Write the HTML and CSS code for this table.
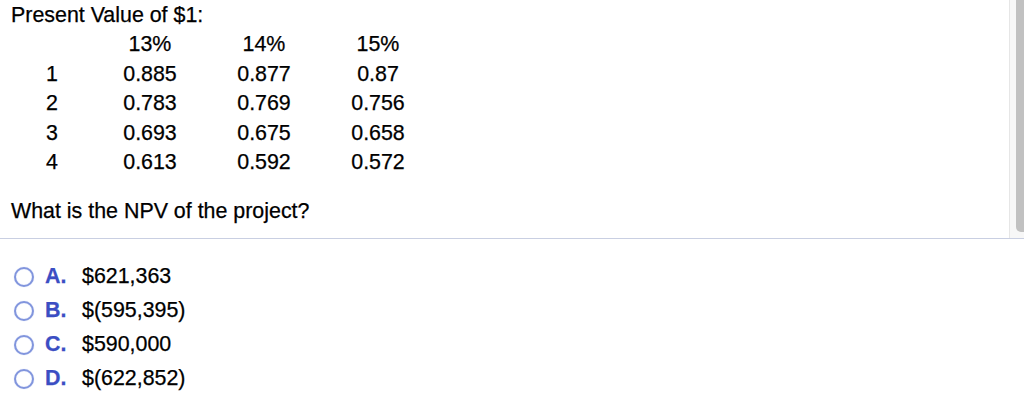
FILE: index.html
```html
<!DOCTYPE html>
<html>
<head>
<meta charset="utf-8">
<link rel="stylesheet" href="styles.css">
</head>
<body>
<div class="pane">
  <div class="content">
    <div class="title">Present Value of $1:</div>
    <div class="pv-table">
      <div></div><div>13%</div><div>14%</div><div>15%</div>
      <div>1</div><div>0.885</div><div>0.877</div><div>0.87</div>
      <div>2</div><div>0.783</div><div>0.769</div><div>0.756</div>
      <div>3</div><div>0.693</div><div>0.675</div><div>0.658</div>
      <div>4</div><div>0.613</div><div>0.592</div><div>0.572</div>
    </div>
    <div class="question">What is the NPV of the project?</div>
  </div>
  <div class="scrollbar"><div class="thumb"></div></div>
</div>
<div class="options">
  <div class="option"><span class="radio"></span><span class="letter">A.</span><span class="answer">$621,363</span></div>
  <div class="option"><span class="radio"></span><span class="letter">B.</span><span class="answer">$(595,395)</span></div>
  <div class="option"><span class="radio"></span><span class="letter">C.</span><span class="answer">$590,000</span></div>
  <div class="option"><span class="radio"></span><span class="letter">D.</span><span class="answer">$(622,852)</span></div>
</div>
</body>
</html>
```
FILE: styles.css
```css
html, body {
  margin: 0;
  padding: 0;
  background: #ffffff;
}
body {
  font-family: "Liberation Sans", Arial, sans-serif;
  font-size: 21.4px;
  color: #000000;
  -webkit-text-stroke: 0.25px #000000;
  width: 1024px;
  height: 419px;
  overflow: hidden;
}
.pane {
  display: flex;
  height: 238px;
  border-bottom: 1px solid #c9cfe2;
}
.content {
  flex: 1;
  padding-left: 11px;
}
.title {
  line-height: 30px;
}
.pv-table {
  display: grid;
  grid-template-columns: 82px 114px 114px 114px;
  grid-auto-rows: 29.5px;
  line-height: 29.5px;
  text-align: center;
}
.question {
  margin-top: 19.5px;
  line-height: 29.5px;
}
.scrollbar {
  width: 14px;
  border-left: 1px solid #e6e6e6;
  background: #f7f7f7;
  display: flex;
  justify-content: flex-end;
}
.thumb {
  width: 8px;
  height: 232px;
  background: #c1c1c1;
  border-bottom-left-radius: 5px;
}
.options {
  padding-top: 20.5px;
}
.option {
  display: flex;
  align-items: center;
  height: 34px;
}
.radio {
  box-sizing: border-box;
  width: 20px;
  height: 20px;
  margin-left: 13.5px;
  border-radius: 50%;
  border: 2px solid #8195dd;
  box-shadow: inset 0 0 1px #b8c4ef, 0 0 1px #b8c4ef;
}
.letter {
  margin-left: 11.5px;
  width: 37px;
  font-weight: bold;
  color: #3b4ec3;
  -webkit-text-stroke: 0.25px #3b4ec3;
}
.answer {
  color: #000000;
}
```
